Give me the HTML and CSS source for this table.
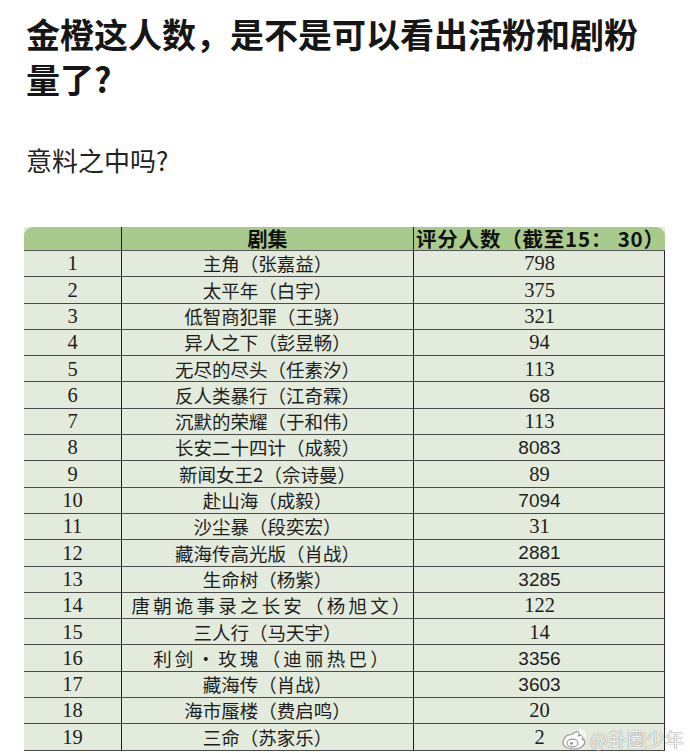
FILE: index.html
```html
<!DOCTYPE html>
<html lang="zh-CN">
<head>
<meta charset="utf-8">
<title>金橙这人数</title>
<link rel="stylesheet" href="styles.css">
</head>
<body>
<div class="page">
  <h1 class="title">金橙这人数，是不是可以看出活粉和剧粉量了?</h1>
  <p class="question">意料之中吗?</p>
  <div class="sheet">
    <div class="row head">
      <div class="cell"></div>
      <div class="cell">剧集</div>
      <div class="cell left">评分人数（截至15： 30）</div>
    </div>
    <div class="row"><div class="cell num">1</div><div class="cell">主角（张嘉益）</div><div class="cell num">798</div></div>
    <div class="row"><div class="cell num">2</div><div class="cell">太平年（白宇）</div><div class="cell num">375</div></div>
    <div class="row"><div class="cell num">3</div><div class="cell">低智商犯罪（王骁）</div><div class="cell num">321</div></div>
    <div class="row"><div class="cell num">4</div><div class="cell">异人之下（彭昱畅）</div><div class="cell num">94</div></div>
    <div class="row"><div class="cell num">5</div><div class="cell">无尽的尽头（任素汐）</div><div class="cell num">113</div></div>
    <div class="row"><div class="cell num">6</div><div class="cell">反人类暴行（江奇霖）</div><div class="cell num sans">68</div></div>
    <div class="row"><div class="cell num">7</div><div class="cell">沉默的荣耀（于和伟）</div><div class="cell num">113</div></div>
    <div class="row"><div class="cell num">8</div><div class="cell">长安二十四计（成毅）</div><div class="cell num sans">8083</div></div>
    <div class="row"><div class="cell num">9</div><div class="cell">新闻女王2（佘诗曼）</div><div class="cell num">89</div></div>
    <div class="row"><div class="cell num">10</div><div class="cell">赴山海（成毅）</div><div class="cell num sans">7094</div></div>
    <div class="row"><div class="cell num">11</div><div class="cell">沙尘暴（段奕宏）</div><div class="cell num">31</div></div>
    <div class="row"><div class="cell num">12</div><div class="cell">藏海传高光版（肖战）</div><div class="cell num sans">2881</div></div>
    <div class="row"><div class="cell num">13</div><div class="cell">生命树（杨紫）</div><div class="cell num sans">3285</div></div>
    <div class="row"><div class="cell num">14</div><div class="cell wide">唐朝诡事录之长安（杨旭文）</div><div class="cell num">122</div></div>
    <div class="row"><div class="cell num">15</div><div class="cell">三人行（马天宇）</div><div class="cell num">14</div></div>
    <div class="row"><div class="cell num">16</div><div class="cell wide">利剑·玫瑰（迪丽热巴）</div><div class="cell num sans">3356</div></div>
    <div class="row"><div class="cell num">17</div><div class="cell">藏海传（肖战）</div><div class="cell num sans">3603</div></div>
    <div class="row"><div class="cell num">18</div><div class="cell">海市蜃楼（费启鸣）</div><div class="cell num">20</div></div>
    <div class="row"><div class="cell num">19</div><div class="cell">三命（苏家乐）</div><div class="cell num">2</div></div>
  </div>
  <div class="watermark">
    <svg class="wb" width="26" height="22" viewBox="0 0 26 22">
      <path d="M10.5 6.5c3.5-3 7-3.5 7.6-1.6.3.9 0 2-.5 2.9 1.5-.5 3.6-.6 4 .9.4 1.2-.5 2.4-.5 2.4 1.6.5 2.7 1.6 2.7 3.2 0 3.3-4.8 6.7-11.3 6.7C7.2 21 2 18.7 2 14.6c0-2.3 1.6-5 4.3-7.3z" fill="#fff" stroke="#9a9a9a" stroke-width="1.2"/>
      <ellipse cx="11.5" cy="15" rx="5.5" ry="3.8" fill="none" stroke="#9a9a9a" stroke-width="1.2"/>
      <circle cx="10.5" cy="15.3" r="1.6" fill="#9a9a9a"/>
      <path d="M18.5 1.8a5.5 5.5 0 0 1 5.6 6.8M18.8 4.4a2.8 2.8 0 0 1 2.8 3.4" fill="none" stroke="#fff" stroke-width="1.6" stroke-linecap="round"/>
    </svg>
    <span class="wm-text">@卦圈少年</span>
  </div>
</div>
</body>
</html>
```
FILE: styles.css
```css
html, body {
  margin: 0;
  padding: 0;
  background: #ffffff;
}

.page {
  position: relative;
  width: 690px;
  height: 753px;
  overflow: hidden;
  font-family: "Noto Sans CJK SC", "Noto Sans", sans-serif;
  color: #1a1a1a;
}

.title {
  margin: 0;
  padding: 11px 0 0 26px;
  width: 640px;
  font-size: 34px;
  line-height: 45px;
  font-weight: 700;
  color: #161616;
}

.question {
  margin: 41px 0 0 26px;
  font-size: 26px;
  line-height: 36px;
  font-weight: 400;
  color: #222;
}

.sheet {
  margin: 49px 0 0 24px;
  width: 641px;
  background: #e3ebdc;
}

.row {
  display: grid;
  grid-template-columns: 98px 292px 251px;
  height: 26.3px;
  box-sizing: border-box;
  border-bottom: 1.5px solid #4a4a4a;
  border-right: 1.5px solid #2a2a2a;
}

.row.head {
  height: 24px;
  background: #a9ca8d;
  border-radius: 9px 9px 0 0;
  border-right: none;
  border-bottom: 1.5px solid #555;
  font-weight: 700;
}

.cell {
  display: flex;
  align-items: center;
  justify-content: center;
  border-right: 1.5px solid #1e1e1e;
  font-size: 18.5px;
  line-height: 1;
  color: #1d1d1d;
  white-space: nowrap;
}

.row.head .cell {
  font-size: 20px;
  color: #111;
}

.row.head .cell.left {
  font-size: 20.5px;
  letter-spacing: 0.8px;
}

.cell:last-child {
  border-right: none;
}

.cell.left {
  justify-content: flex-start;
  padding-left: 2px;
}

.cell.num {
  font-family: "Liberation Serif", "Noto Sans CJK SC", serif;
  font-size: 20.5px;
}

.cell.num.sans {
  font-family: "Liberation Sans", "Noto Sans", sans-serif;
  font-size: 19px;
}

.cell.wide {
  letter-spacing: 3.2px;
  padding-left: 10px;
}

.watermark {
  position: absolute;
  right: 6px;
  top: 727px;
  display: flex;
  align-items: center;
  gap: 3px;
  height: 24px;
}

.wm-text {
  font-family: "Noto Sans CJK SC", sans-serif;
  font-size: 19px;
  line-height: 22px;
  color: rgba(255, 255, 255, 0.92);
  text-shadow: 0 0 1px #8a8a8a, 0 0 1px #8a8a8a;
}
```
